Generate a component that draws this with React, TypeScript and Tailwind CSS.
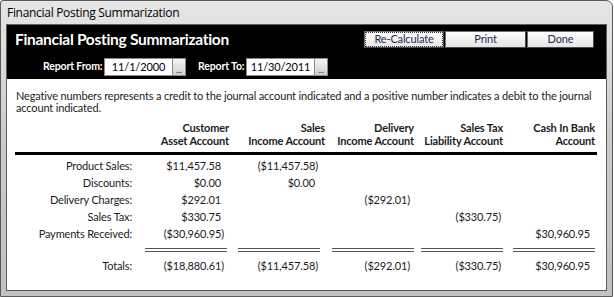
import React from "react";

const font = { fontFamily: "Lato, 'Open Sans', sans-serif" };

type Cell = { v: string; neg?: boolean } | null;

const cols = [
  { h1: "Customer", h2: "Asset Account", w: "w-[97px]", vpr: "pr-[5px]", seg: "mr-[2px]" },
  { h1: "Sales", h2: "Income Account", w: "w-[96px]", vpr: "pr-[7px]", seg: "mr-[5px]" },
  { h1: "Delivery", h2: "Income Account", w: "w-[89px]", vpr: "pr-[4px]", seg: "mr-[0px]" },
  { h1: "Sales Tax", h2: "Liability Account", w: "w-[89px]", vpr: "pr-[2px]", seg: "mr-[0px]" },
  { h1: "Cash In Bank", h2: "Account", w: "w-[92px]", vpr: "pr-[2px]", seg: "mr-[0px]" },
];

const rows: { label: string; cells: Cell[] }[] = [
  { label: "Product Sales:", cells: [{ v: "$11,457.58" }, { v: "($11,457.58)", neg: true }, null, null, null] },
  { label: "Discounts:", cells: [{ v: "$0.00" }, { v: "$0.00" }, null, null, null] },
  { label: "Delivery Charges:", cells: [{ v: "$292.01" }, null, { v: "($292.01)", neg: true }, null, null] },
  { label: "Sales Tax:", cells: [{ v: "$330.75" }, null, null, { v: "($330.75)", neg: true }, null] },
  { label: "Payments Received:", cells: [{ v: "($30,960.95)", neg: true }, null, null, null, { v: "$30,960.95" }] },
];

const totals: Cell[] = [
  { v: "($18,880.61)", neg: true },
  { v: "($11,457.58)", neg: true },
  { v: "($292.01)", neg: true },
  { v: "($330.75)", neg: true },
  { v: "$30,960.95" },
];

function Row({ label, cells }: { label: string; cells: Cell[] }) {
  return (
    <div className="flex h-[17px] items-center text-[11px] leading-[17px] text-[#1c1c1c] whitespace-nowrap">
      <div className="w-[117px] text-right">{label}</div>
      {cols.map((c, i) => (
        <div key={i} className={`${c.w} ${c.vpr} text-right`}>
          {cells[i] ? (
            <span className={cells[i]!.neg ? "" : "pr-[3px]"}>{cells[i]!.v}</span>
          ) : null}
        </div>
      ))}
    </div>
  );
}

function Btn({ label, w, focus }: { label: string; w: string; focus?: boolean }) {
  return (
    <div
      className={`${w} h-[17px] border border-[#707070] border-r-[#4a4a4a] border-b-[#4a4a4a] bg-gradient-to-b from-white to-[#e4e4e4] flex items-center justify-center text-[11px] text-[#1d2d4d] ${focus ? "outline-1 outline-dotted outline-[#333] -outline-offset-2" : ""}`}
    >
      {label}
    </div>
  );
}

function DateBox({ value, w }: { value: string; w: string }) {
  return (
    <div className="flex h-[18px]">
      <div className={`${w} h-full bg-white border border-[#8a8a8a] flex items-center justify-center text-[11px] font-normal text-black`}>
        {value}
      </div>
      <div className="w-[13px] h-full bg-gradient-to-b from-[#f4f4f4] to-[#d0d0d0] border border-[#8a8a8a] border-l-0 flex items-end justify-center text-[9px] leading-[10px] font-normal text-[#333]">
        ...
      </div>
    </div>
  );
}

export default function App() {
  return (
    <div className="w-[614px] h-[297px] bg-white tracking-[-0.15px]" style={font}>
      <div className="w-[613px] h-[297px] border border-[#5a5a5a] rounded-tr-[7px] rounded-tl-[3px] bg-gradient-to-b from-[#e6e6e6] via-[#c9c9c9] to-[#c2c2c2] flex flex-col px-[5px] pb-[5px]">
        <div className="h-[23px] flex items-center pl-[1px] text-[12px] text-black" style={{ fontFamily: "'Open Sans', sans-serif" }}>
          <span className="tracking-[-0.3px]">Financial Posting Summarization</span>
        </div>
        <div className="flex-1 border border-[#5c5c5c] bg-white flex flex-col">
          {/* black header */}
          <div className="h-[54px] bg-black flex flex-col pt-[6px]">
            <div className="flex items-center h-[17px] pr-[12px]">
              <div className="pl-[8px] text-[15.5px] font-bold text-white tracking-[-0.3px] whitespace-nowrap">
                Financial Posting Summarization
              </div>
              <div className="flex-1" />
              <div className="flex gap-[1px]">
                <Btn label="Re-Calculate" w="w-[80px]" focus />
                <Btn label="Print" w="w-[81px]" />
                <Btn label="Done" w="w-[67px]" />
              </div>
            </div>
            <div className="flex items-center mt-[10px] h-[18px] text-[10.5px] font-bold text-white whitespace-nowrap">
              <div className="ml-[36px] w-[58px] text-right">Report From:</div>
              <div className="ml-[3px]">
                <DateBox value="11/1/2000" w="w-[69px]" />
              </div>
              <div className="ml-[12px] w-[45px] text-right">Report To:</div>
              <div className="ml-[3px]">
                <DateBox value="11/30/2011" w="w-[69px]" />
              </div>
            </div>
          </div>
          {/* content */}
          <div className="flex-1 flex flex-col pt-[11px] pl-[8px]">
            <div className="pl-[1px] text-[11px] leading-[12px] text-[#1c1c1c] whitespace-nowrap">
              Negative numbers represents a credit to the journal account indicated and a positive number indicates a debit to the journal
              <br />
              account indicated.
            </div>
            <div className="flex mt-[7px] text-[11px] leading-[13px] font-bold text-[#1c1c1c] whitespace-nowrap">
              <div className="w-[117px]" />
              {cols.map((c, i) => (
                <div key={i} className={`${c.w} text-right`}>
                  <div>{c.h1}</div>
                  <div>{c.h2}</div>
                </div>
              ))}
            </div>
            <div className="mt-[5px] w-[582px] h-[3px] bg-black" />
            <div className="mt-[2px] flex flex-col">
              {rows.map((r, i) => (
                <Row key={i} label={r.label} cells={r.cells} />
              ))}
            </div>
            <div className="flex mt-[6px]">
              <div className="w-[117px]" />
              {cols.map((c, i) => (
                <div key={i} className={`${c.w} flex justify-end`}>
                  <div className={`w-[82px] h-[4px] border-t border-b border-[#555] ${c.seg}`} />
                </div>
              ))}
            </div>
            <div className="mt-[5px]">
              <Row label="Totals:" cells={totals} />
            </div>
          </div>
        </div>
      </div>
    </div>
  );
}
